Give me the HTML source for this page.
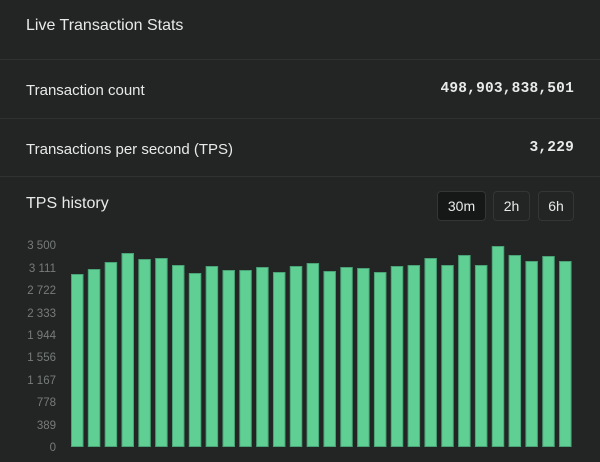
<!DOCTYPE html>
<html><head><meta charset="utf-8"><style>
body{margin:0;width:600px;height:462px;overflow:hidden;background:#222524;font-family:"Liberation Sans",sans-serif;color:#e8eae9;position:relative}
.t{position:absolute;left:26px;font-size:15px}
.line{position:absolute;left:0;width:600px;height:1px;background:#2e3231}
.v{position:absolute;right:26px;font-family:"Liberation Mono",monospace;font-size:14.5px;font-weight:bold;letter-spacing:0.2px}
.b{position:absolute;top:191px;height:30px;border:1px solid #323635;border-radius:4px;box-sizing:border-box;font-size:14px;text-align:center;line-height:28px}
</style></head><body>
<div class="t" style="top:17px;font-size:16px">Live Transaction Stats</div>
<div class="line" style="top:59px"></div>
<div class="t" style="top:82px">Transaction count</div>
<div class="v" style="top:81px">498,903,838,501</div>
<div class="line" style="top:118px"></div>
<div class="t" style="top:141px">Transactions per second (TPS)</div>
<div class="v" style="top:140px">3,229</div>
<div class="line" style="top:176px"></div>
<div class="t" style="top:195px;font-size:16px">TPS history</div>
<div class="b" style="left:437px;width:49px;background:#161817">30m</div>
<div class="b" style="left:493px;width:37px">2h</div>
<div class="b" style="left:538px;width:36px">6h</div>
<svg width="600" height="462" style="position:absolute;left:0;top:0">
<g font-family="Liberation Sans" font-size="11.5" fill="#777b7a" text-anchor="end">
<text x="56" y="249">3 500</text><text x="56" y="272">3 111</text><text x="56" y="294">2 722</text><text x="56" y="317">2 333</text><text x="56" y="339">1 944</text><text x="56" y="361">1 556</text><text x="56" y="384">1 167</text><text x="56" y="406">778</text><text x="56" y="429">389</text><text x="56" y="451">0</text>
</g>
<g fill="#5fcf94" stroke="#4aa377" stroke-width="1" id="bars"></g>
</svg>
<script>
var t=[274,269,262,253,259,258,265,273,266,270,270,267,272,266,263,271,267,268,272,266,265,258,265,255,265,246,255,261,256,261];
var g=document.getElementById('bars'),s='';
for(var i=0;i<30;i++){var x=71+i*16.83;s+='<rect x="'+(x+0.5)+'" y="'+(t[i]+0.5)+'" width="11.5" height="'+(446-t[i])+'"/>';}
g.innerHTML=s;
</script>
</body></html>
